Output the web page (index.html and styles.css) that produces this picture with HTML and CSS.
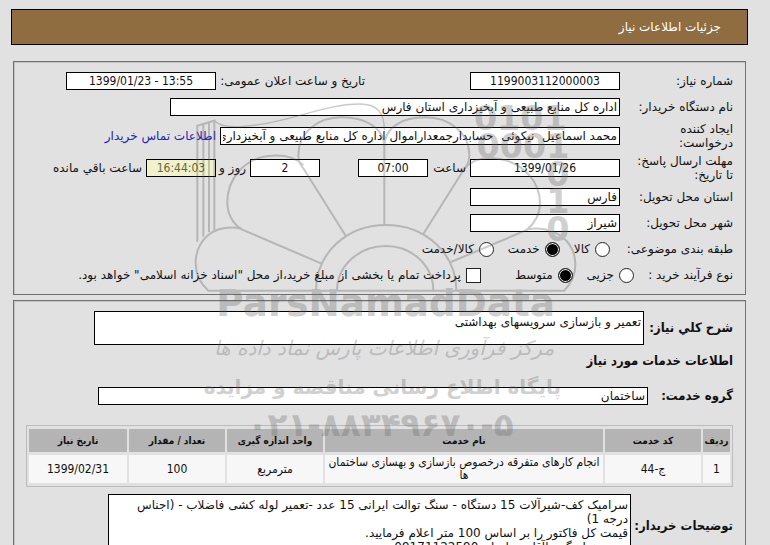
FILE: index.html
```html
<!DOCTYPE html>
<html lang="fa" dir="rtl">
<head>
<meta charset="utf-8">
<title>جزئیات اطلاعات نیاز</title>
<link rel="stylesheet" href="styles.css">
</head>
<body>
<header class="title-bar"><h1>جزئیات اطلاعات نیاز</h1></header>

<main>
  <section class="panel need">
    <div class="row">
      <label class="name" for="need-no">شماره نیاز:</label>
      <input class="field medium center" id="need-no" value="1199003112000003">
      <label class="announce" for="announce">تاریخ و ساعت اعلان عمومی:</label>
      <input class="field medium center" id="announce" dir="ltr" value="1399/01/23 - 13:55">
    </div>
    <div class="row">
      <label class="name" for="buyer">نام دستگاه خریدار:</label>
      <input class="field wide" id="buyer" value="اداره کل منابع طبیعی و آبخیزداری استان فارس">
    </div>
    <div class="row tall">
      <label class="name" for="creator">ایجاد کننده<br>درخواست:</label>
      <input class="field person" id="creator" value="محمد اسماعیل  نیکوئی  حسابدارجمعداراموال اداره کل منابع طبیعی و آبخیزداری">
      <a class="contact" href="#contact">اطلاعات تماس خریدار</a>
    </div>
    <div class="row tall">
      <label class="name" for="deadline">مهلت ارسال پاسخ:<br>تا تاریخ:</label>
      <input class="field medium center" id="deadline" value="1399/01/26">
      <label class="at" for="hour">ساعت</label>
      <input class="field short center" id="hour" value="07:00">
      <input class="field short center days" id="days" value="2">
      <label class="and" for="days">روز و</label>
      <input class="field short center countdown" id="countdown" value="16:44:03">
      <label for="countdown">ساعت باقي مانده</label>
    </div>
    <div class="row">
      <label class="name" for="province">استان محل تحویل:</label>
      <input class="field medium" id="province" value="فارس">
    </div>
    <div class="row">
      <label class="name" for="city">شهر محل تحویل:</label>
      <input class="field medium" id="city" value="شیراز">
    </div>
    <div class="row" role="radiogroup" aria-labelledby="subject">
      <span class="name choice-name" id="subject">طبقه بندی موضوعی:</span>
      <div class="choices">
        <label><input type="radio" name="subject">کالا</label>
        <label><input type="radio" name="subject" checked>خدمت</label>
        <label><input type="radio" name="subject">کالا/خدمت</label>
      </div>
    </div>
    <div class="row" role="radiogroup" aria-labelledby="process">
      <span class="name process-name" id="process">نوع فرآیند خرید :</span>
      <div class="choices">
        <label><input type="radio" name="process">جزیی</label>
        <label><input type="radio" name="process" checked>متوسط</label>
        <label class="treasury"><input type="checkbox">پرداخت تمام یا بخشی از مبلغ خرید،از محل "اسناد خزانه اسلامی" خواهد بود.</label>
      </div>
    </div>
  </section>

  <section class="panel service">
    <div class="row summary">
      <label class="bold" for="summary">شرح کلي نیاز:</label>
      <textarea class="field" id="summary">تعمیر و بازسازی سرویسهای بهداشتی</textarea>
    </div>
    <h2>اطلاعات خدمات مورد نیاز</h2>
    <div class="row group">
      <label class="bold" for="group">گروه خدمت:</label>
      <input class="field" id="group" value="ساختمان">
    </div>
    <table>
      <thead>
        <tr><th class="c-row">ردیف</th><th class="c-mid">کد خدمت</th><th>نام خدمت</th><th class="c-mid">واحد اندازه گیری</th><th class="c-mid">تعداد / مقدار</th><th class="c-date">تاریخ نیاز</th></tr>
      </thead>
      <tbody>
        <tr><td>1</td><td>ج-44</td><td>انجام کارهای متفرقه درخصوص بازسازی و بهسازی ساختمان ها</td><td>مترمربع</td><td>100</td><td>1399/02/31</td></tr>
      </tbody>
    </table>
    <div class="row notes">
      <label class="bold" for="notes">توضیحات خریدار:</label>
      <textarea class="field" id="notes">سرامیک کف-شیرآلات 15 دستگاه - سنگ توالت ایرانی 15 عدد -تعمیر لوله کشی فاضلاب - (اجناس درجه 1)
قیمت کل فاکتور را بر اساس 100 متر اعلام فرمایید.
جهت هماهنگی باآقای سلیمان 09171122590</textarea>
    </div>
  </section>
</main>

<svg class="watermark" viewBox="0 0 1170 1080" aria-hidden="true">
  <g class="lines">
    <path d="M22 455V107L73 92V425M40 102V440M57 97V427"/>
    <path class="thin" d="M73 92C100 118 160 112 230 100C330 82 420 42 510 42C560 42 583 66 583 120"/>
    <path d="M583 405V170C583 110 520 82 455 82C380 82 325 130 325 195C325 215 330 222 340 235L467 437"/>
    <path d="M583 170C583 110 640 82 705 82C780 82 838 130 838 195C838 215 834 222 824 235L700 432"/>
    <path d="M340 225C310 197 270 193 230 199C160 208 112 270 112 335C112 372 128 400 155 418L393 520"/>
    <path d="M824 235C850 205 890 200 930 207C1000 220 1050 275 1050 340C1050 375 1036 398 1010 420L783 516"/>
    <path d="M155 416C120 408 80 415 55 435C25 460 17 490 17 520C17 550 30 580 55 602H1122C1145 580 1156 555 1156 525C1156 450 1090 405 1010 418"/>
    <path d="M378 602C378 490 470 405 588 405C706 405 799 490 799 602M441 602C441 530 505 468 587 468C669 468 730 530 730 602"/>
  </g>
  <g class="digits" direction="ltr">
    <text x="1130" y="120">0101</text>
    <text x="1138" y="204">0001</text>
    <text x="1138" y="287">0</text>
    <text x="1138" y="370">1</text>
    <text x="1138" y="452">0</text>
  </g>
  <g class="words">
    <text class="brand" direction="ltr" x="587" y="677">ParsNamadData</text>
    <text class="script" direction="rtl" x="582" y="795">مرکز فرآوری اطلاعات پارس نماد داده ها</text>
    <text class="tagline" direction="rtl" x="577" y="912">پایگاه اطلاع رسانی مناقصه و مزایده</text>
    <text class="phone" direction="ltr" x="572" y="1037">۰۲۱-۸۸۳۴۹۶۷۰-۵</text>
  </g>
</svg>
</body>
</html>
```
FILE: styles.css
```css
* { box-sizing: border-box; }

body {
  margin: 0;
  padding: 9px 22px 0 11px;
  height: 100vh;
  overflow: hidden;
  background: #e1e1e1;
  color: #111;
  font: 12px/14px "DejaVu Sans", sans-serif;
}

h1, h2 { margin: 0; font-size: 12px; }

.title-bar {
  border: 1px solid #000;
  background: #8f6d40;
  padding: 10px 26px;
}
.title-bar h1 { font-weight: normal; color: #fff; }

main { padding: 16px 2px 0; }

.panel {
  border: 1px solid #707070;
  box-shadow: inset 1px 1px #c4c4c4;
  padding: 10px 12px;
  margin-bottom: 5px;
}

.need { display: grid; gap: 8px; }
.row { display: flex; align-items: center; gap: 4px; min-height: 18px; white-space: nowrap; }
.tall { min-height: 28px; margin: -2px 0; }
.name { flex: 0 0 109px; }

.field {
  margin: 0;
  border: 1px solid #000;
  border-radius: 0;
  padding: 0 2px;
  height: 18px;
  background: #fff;
  color: #111;
  font: inherit;
  resize: none;
  overflow: hidden;
}
.center { text-align: center; font-family: "DejaVu Sans Condensed", "DejaVu Sans", sans-serif; }
.medium { width: 150px; }
.short { width: 70px; }
.wide { width: 450px; }
.person { width: 400px; }
.at { width: 34px; }
.days { margin-right: 34px; }
.and { width: 26px; }
.countdown { background: #f1f1cb; color: #66663a; }
.announce { width: 246px; padding-right: 101px; }
.contact { color: #2222b8; text-decoration: none; }

.choice-name { flex-basis: 119px; }
.process-name { flex-basis: 95px; }
.choices { display: flex; gap: 14px; }
.choices label { display: flex; align-items: center; gap: 5px; }
.choices input {
  appearance: none;
  margin: 0;
  width: 15px;
  height: 15px;
  border: 1px solid #222;
  background: #fff;
}
.choices input[type="radio"] { border-radius: 50%; }
.choices input[type="radio"]:checked { background: #000; box-shadow: inset 0 0 0 1px #fff; }
.treasury { margin-right: 20px; }

.bold, h2 { font-size: 13px; font-weight: bold; font-family: "DejaVu Sans Condensed", "DejaVu Sans", sans-serif; }
.service { display: grid; gap: 9px; }
.summary label { width: 85px; }
.summary .field { width: 550px; height: 34px; padding-top: 3px; }
.group label { width: 81px; }
.group .field { width: 550px; }
.service h2 { padding-bottom: 10px; }

table {
  width: 100%;
  margin-top: 11px;
  border: 1px solid #bbb;
  border-spacing: 2px 3px;
  table-layout: fixed;
  font: 12px/13px "DejaVu Sans Condensed", "DejaVu Sans", sans-serif;
  text-align: center;
}
th, td { padding: 1px; }
th { height: 23px; background: #b4b4b4; font-size: 10px; }
td { height: 28px; background: #f7f7f7; }
.c-row { width: 27px; }
.c-mid { width: 96px; }
.c-date { width: 98px; }

.notes { margin-top: -2px; }
.notes label { width: 98px; }
.notes .field { width: 523px; height: 64px; padding-top: 3px; }

.watermark {
  position: absolute;
  left: 190px;
  top: 90px;
  width: 390px;
  height: 360px;
  opacity: 0.3;
  pointer-events: none;
}
.lines { fill: none; stroke: #555; stroke-width: 6; }
.thin { stroke-width: 4; }
.digits, .words { fill: #666; font-family: "DejaVu Sans", sans-serif; font-weight: bold; }
.digits { font-size: 100px; text-anchor: end; }
.words { text-anchor: middle; }
.brand { font-size: 112px; }
.script { font-size: 60px; font-weight: normal; font-style: italic; }
.tagline { font-size: 60px; }
.phone { font-size: 98px; }
```
